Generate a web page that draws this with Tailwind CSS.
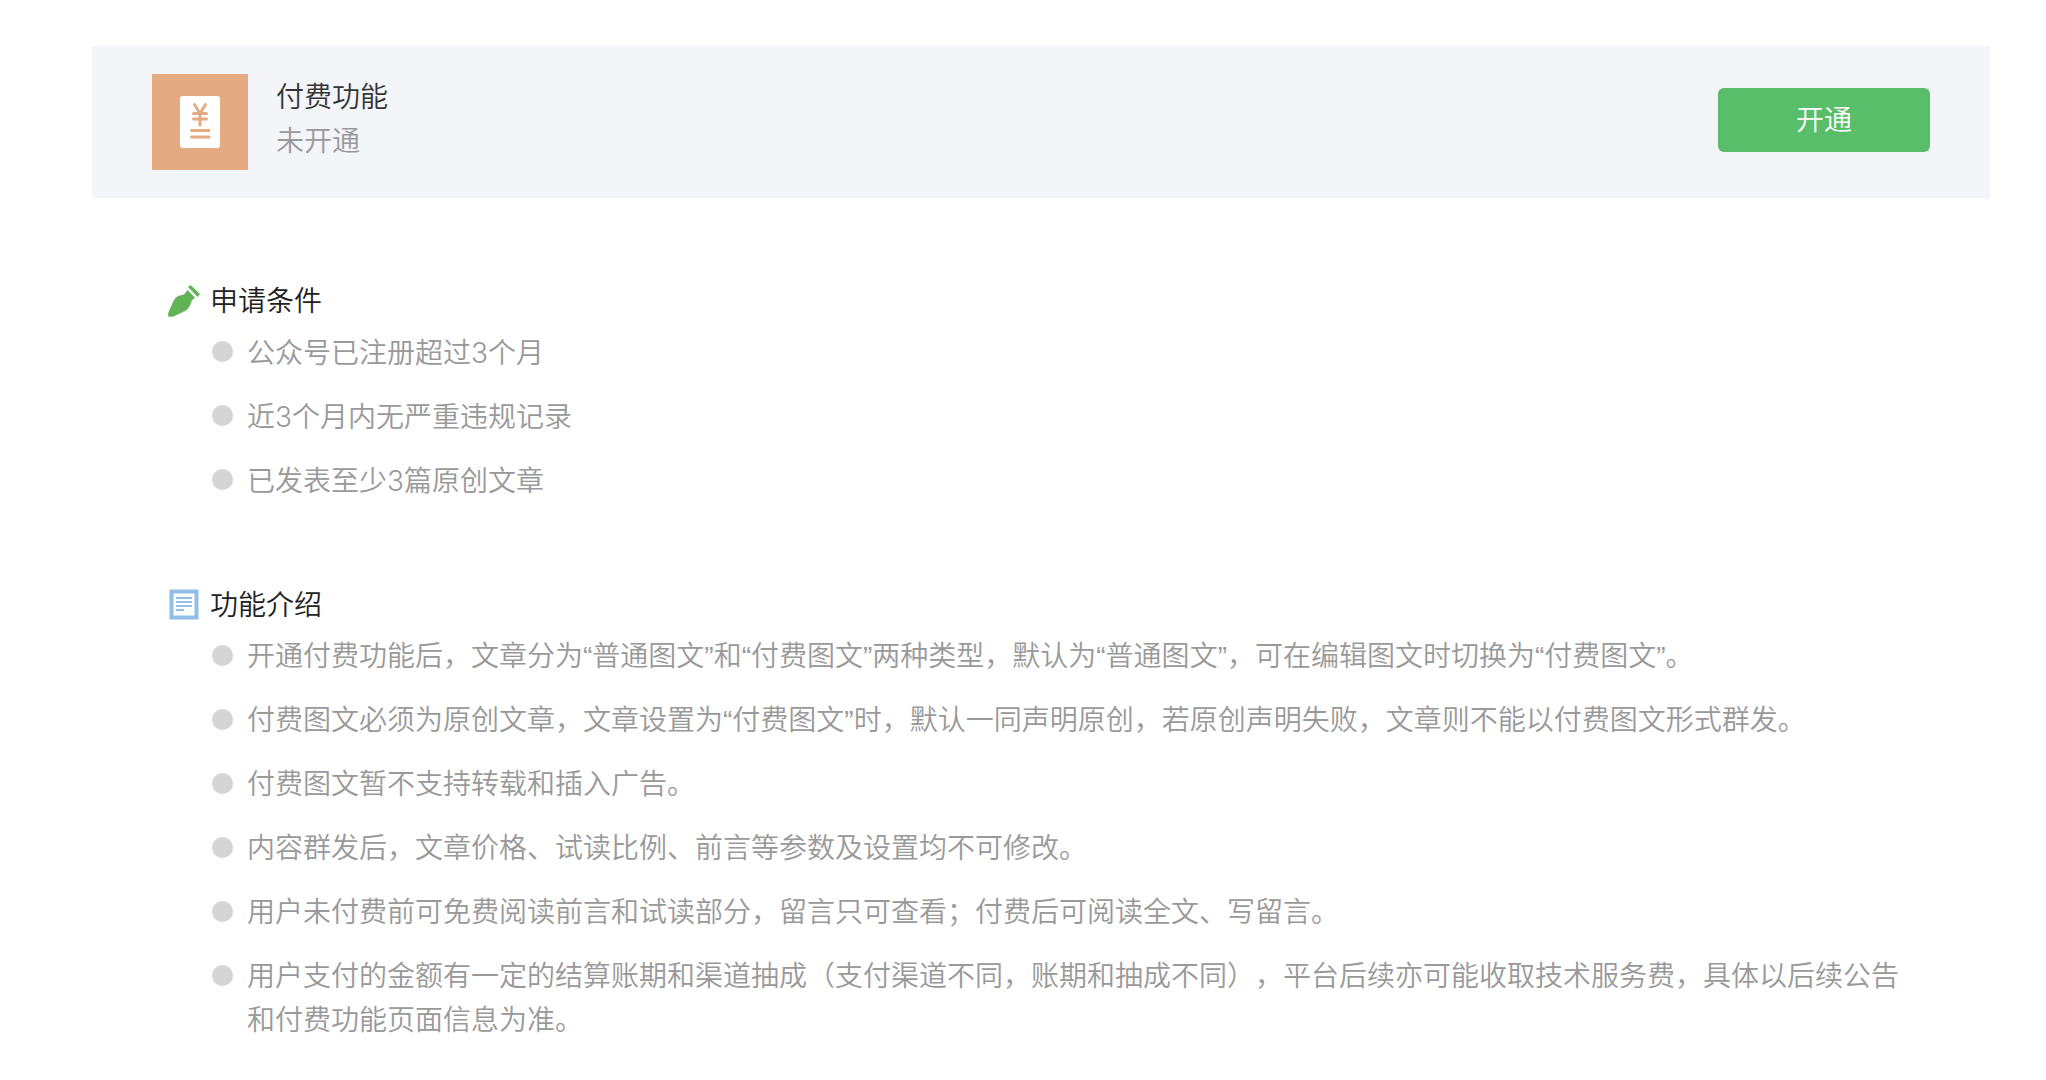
<!DOCTYPE html>
<html lang="zh-CN">
<head>
    <meta charset="UTF-8">
    <meta name="viewport" content="width=device-width, initial-scale=1.0">
    <title>付费功能</title>
    <script src="https://cdn.jsdelivr.net/npm/@tailwindcss/browser@4"></script>
</head>
<body class="bg-white pt-[46px] pr-14 pb-10 pl-[92px] font-['Inter','Noto_Sans_CJK_SC',sans-serif] text-[28px] leading-[44px] font-[350] text-[#999999] [text-spacing-trim:space-all]">
    <header class="flex items-start bg-[#f3f5f9] px-[60px] py-7">
        <svg class="size-24 shrink-0" viewBox="0 0 96 96" fill="none" aria-hidden="true">
            <rect width="96" height="96" fill="#e4ab82"/>
            <rect x="28" y="22" width="40" height="52" rx="3" fill="#fff"/>
            <g stroke="#e4ab82" stroke-width="3" stroke-linecap="round">
                <path d="M42.5 30.5 48 39.5 53.5 30.5M48 39.5V51M41.5 39.5H54.5M41.5 45H54.5"/>
                <path d="M39.5 56.5H57M39.5 63H57"/>
            </g>
        </svg>
        <div class="ml-7 flex-1 pt-px">
            <h1 class="text-[#353535]">付费功能</h1>
            <p>未开通</p>
        </div>
        <button type="button" class="mt-3.5 h-16 w-[212px] shrink-0 cursor-pointer rounded-md bg-[#58be6a] text-white hover:bg-[#4fb061]">开通</button>
    </header>

    <main class="flex flex-col gap-20 pt-[81px] pr-[76px] pl-[76px]">
        <section>
            <h2 class="flex items-center gap-2.5 text-[#222222]">
                <svg class="size-8" viewBox="0 0 32 32" aria-hidden="true">
                    <path fill="#62b256" d="M16 9.5 19.5 5 27 12.5 23.5 16C22.5 20.5 20.5 24.5 16 26.5L5.500 31.500Q2 32 .5 31.500Q-.5 29.500 1 26L5.500 16Q7 12.500 10 11Z"/>
                    <path fill="#62b256" d="M20 2 22.500 0 32 9 29.500 12Z"/>
                </svg>
                申请条件
            </h2>
            <ul class="mt-2 flex flex-col gap-5 pl-11">
                <li class="flex gap-3.5"><span class="mt-2.5 size-[21px] shrink-0 rounded-full bg-[#d5d5d5]"></span><p>公众号已注册超过3个月</p></li>
                <li class="flex gap-3.5"><span class="mt-2.5 size-[21px] shrink-0 rounded-full bg-[#d5d5d5]"></span><p>近3个月内无严重违规记录</p></li>
                <li class="flex gap-3.5"><span class="mt-2.5 size-[21px] shrink-0 rounded-full bg-[#d5d5d5]"></span><p>已发表至少3篇原创文章</p></li>
            </ul>
        </section>

        <section>
            <h2 class="flex items-center gap-2.5 text-[#222222]">
                <svg class="size-8" viewBox="0 0 32 32" fill="none" aria-hidden="true">
                    <rect x="3.5" y="2.5" width="25" height="26" fill="#fff" stroke="#93bee6" stroke-width="4"/>
                    <path stroke="#93bee6" stroke-width="2" d="M8 9H24M8 13H24M8 17H24M8 21H16"/>
                </svg>
                功能介绍
            </h2>
            <ul class="mt-2 flex flex-col gap-5 pl-11 font-['Liberation_Sans','Noto_Sans_CJK_SC',sans-serif]">
                <li class="flex gap-3.5"><span class="mt-2.5 size-[21px] shrink-0 rounded-full bg-[#d5d5d5]"></span><p>开通付费功能后，文章分为“普通图文”和“付费图文”两种类型，默认为“普通图文”，可在编辑图文时切换为“付费图文”。</p></li>
                <li class="flex gap-3.5"><span class="mt-2.5 size-[21px] shrink-0 rounded-full bg-[#d5d5d5]"></span><p>付费图文必须为原创文章，文章设置为“付费图文”时，默认一同声明原创，若原创声明失败，文章则不能以付费图文形式群发。</p></li>
                <li class="flex gap-3.5"><span class="mt-2.5 size-[21px] shrink-0 rounded-full bg-[#d5d5d5]"></span><p>付费图文暂不支持转载和插入广告。</p></li>
                <li class="flex gap-3.5"><span class="mt-2.5 size-[21px] shrink-0 rounded-full bg-[#d5d5d5]"></span><p>内容群发后，文章价格、试读比例、前言等参数及设置均不可修改。</p></li>
                <li class="flex gap-3.5"><span class="mt-2.5 size-[21px] shrink-0 rounded-full bg-[#d5d5d5]"></span><p>用户未付费前可免费阅读前言和试读部分，留言只可查看；付费后可阅读全文、写留言。</p></li>
                <li class="flex gap-3.5"><span class="mt-2.5 size-[21px] shrink-0 rounded-full bg-[#d5d5d5]"></span><p>用户支付的金额有一定的结算账期和渠道抽成（支付渠道不同，账期和抽成不同），平台后续亦可能收取技术服务费，具体以后续公告和付费功能页面信息为准。</p></li>
            </ul>
        </section>
    </main>
</body>
</html>
